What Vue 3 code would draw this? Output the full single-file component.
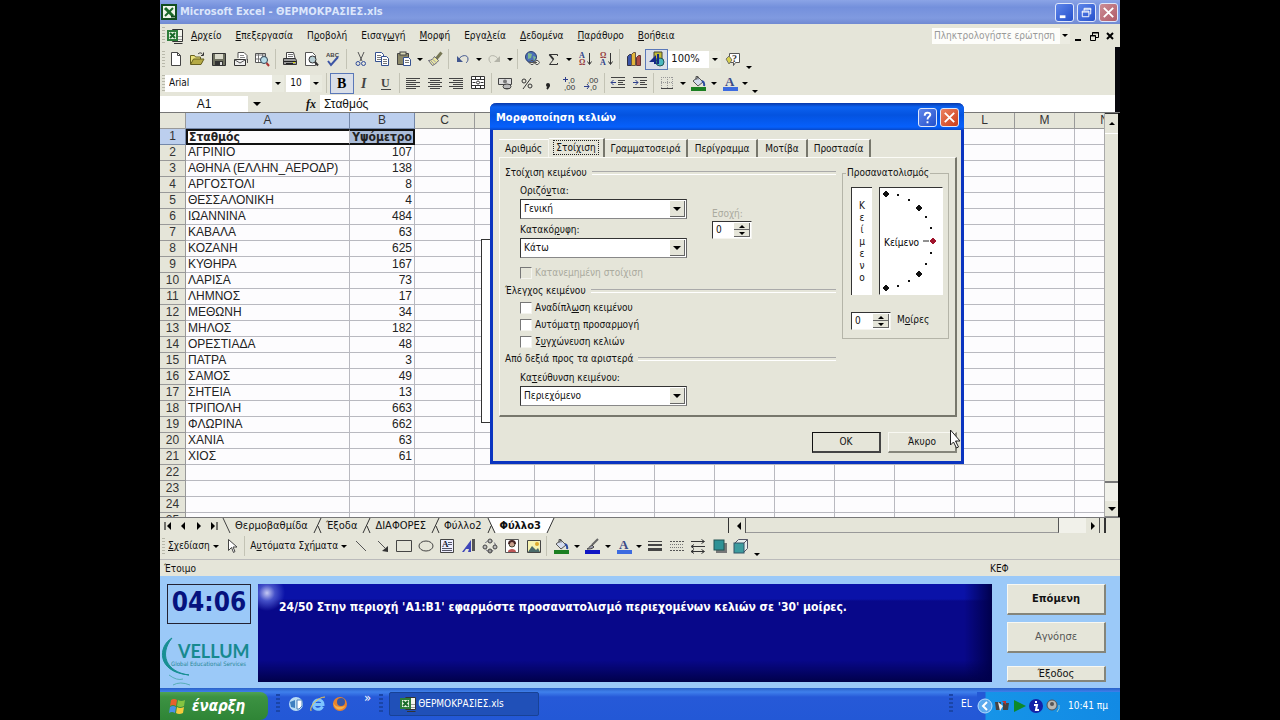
<script setup>
import { ref } from 'vue'

const menus = [
  ['', 'Α', 'ρχείο'], ['', 'Ε', 'πεξεργασία'], ['Π', 'ρ', 'οβολή'], ['Εισαγ', 'ω', 'γή'], ['', 'Μ', 'ορφή'],
  ['Εργα', 'λ', 'εία'], ['', 'Δ', 'εδομένα'], ['', 'Π', 'αράθυρο'], ['', 'Β', 'οήθεια'],
]
const stations = [
  ['ΑΓΡΙΝΙΟ', 107], ['ΑΘΗΝΑ (ΕΛΛΗΝ_ΑΕΡΟΔΡ)', 138], ['ΑΡΓΟΣΤΟΛΙ', 8], ['ΘΕΣΣΑΛΟΝΙΚΗ', 4], ['ΙΩΑΝΝΙΝΑ', 484],
  ['ΚΑΒΑΛΑ', 63], ['ΚΟΖΑΝΗ', 625], ['ΚΥΘΗΡΑ', 167], ['ΛΑΡΙΣΑ', 73], ['ΛΗΜΝΟΣ', 17], ['ΜΕΘΩΝΗ', 34], ['ΜΗΛΟΣ', 182],
  ['ΟΡΕΣΤΙΑΔΑ', 48], ['ΠΑΤΡΑ', 3], ['ΣΑΜΟΣ', 49], ['ΣΗΤΕΙΑ', 13], ['ΤΡΙΠΟΛΗ', 663], ['ΦΛΩΡΙΝΑ', 662], ['ΧΑΝΙΑ', 63], ['ΧΙΟΣ', 61],
  ['', ''], ['', ''], ['', ''], ['', ''],
]
// Headings behind the dialog stay blank.
const letters = ['C', '', '', '', '', '', '', '', '', 'L', 'M', 'N']
const sheets = ['Θερμοβαθμίδα', 'Έξοδα', 'ΔΙΑΦΟΡΕΣ', 'Φύλλο2', 'Φύλλο3']
const dialogTabs = ['Αριθμός', 'Στοίχιση', 'Γραμματοσειρά', 'Περίγραμμα', 'Μοτίβα', 'Προστασία']
const horizontal = ref('Γενική')
const vertical = ref('Κάτω')
const direction = ref('Περιεχόμενο')
const checks = [['Αναδίπλ', 'ω', 'ση κειμένου'], ['Αυτόματ', 'η', ' προσαρμογή'], ['Σ', 'υ', 'γχώνευση κελιών']]
const dial = [
  [6, 6, 2], [18, 7, 1], [29, 12, 1], [39, 20, 2], [46, 29, 1], [51, 40, 1], [53, 53, 3],
  [51, 65, 1], [46, 76, 1], [39, 86, 2], [29, 93, 1], [18, 98, 1], [6, 100, 2],
]

const g = (d, c = '#333', w = 1, f = 'none') => `<path d="${d}" stroke="${c}" stroke-width="${w}" fill="${f}"/>`
const lines = (rows, c = '#444') => rows.map(([x, y, w]) => `<rect x="${x}" y="${y}" width="${w}" height="1" fill="${c}"/>`).join('')
const bucket = g('M3 6l5-4 5 5-5 4z', '#555', 1, '#d5dced') + g('M6 5V1.500h2v3', '#555') + g('M12 6c2 1 2.500 3 2 5', '#2c4aa0', 2)
const sortArrow = g('M12.500 2v11M10.500 10.500l2 3 2-3')
const txt = (x, y, s, c, t, extra = '') => `<text x="${x}" y="${y}" font-size="${s}" fill="${c}" font-family="Liberation Serif, serif" font-weight="bold" ${extra}>${t}</text>`

const icons = {
  excel: '<rect width="16" height="16" fill="#114d20"/><rect x="2" y="2" width="12" height="12" fill="#eef5ea"/>' + g('M4 4l8 8', '#1a6a2a', 3) + g('M12 4l-8 8', '#1a6a2a', 2) + g('M10 12.500h4', '#114d20', 2),
  book: g('M5.500 1.500h10v12h-10z', '#333', 1, '#f4f6ee') + g('M7 15.500h8.500', '#333') + '<rect x="0" y="2" width="11" height="11" fill="#2d7d3a"/><rect x="2" y="4" width="7" height="7" fill="#e6f3e0"/>' + g('M3 5l5 5M8 5l-5 5', '#1a6a2a', 2) + g('M11 8.500h4M11 11.500h4', '#999'),
  new: g('M3.500 1.500h6l3 3v10h-9z', '#444', 1, '#fff') + g('M9.500 1.500v3h3', '#444'),
  open: g('M1.500 13V4.500h4l1 1.500h5v2', '#666020', 1, '#e9e07c') + g('M1.500 13.500l3-5.500h10.500l-3 5.500z', '#666020', 1, '#b5aa45') + g('M9 3c2-2 4-1 5 1M14.500 1.500V4.500H12', '#333'),
  save: g('M1.500 2.500h13v12h-13z', '#333', 1, '#6e7060') + '<rect x="4" y="3" width="8" height="5" fill="#dadacb"/><rect x="4" y="10" width="8" height="4" fill="#333"/><rect x="9" y="11" width="2" height="3" fill="#ddd"/>',
  mail: g('M5 7V1.500h6l3 3V9', '#555', 1, '#fff') + g('M7 4.500h4M7 6.500h5', '#888') + g('M1.500 8.500h11v6h-11z', '#333', 1, '#eee') + g('M2 9l5 3 5-3', '#555') + g('M14.500 8v4', '#555'),
  search: g('M1.500 2.500h10v9h-10z', '#555', 1, '#fff') + g('M2 4h9M4.500 3v8M8.500 3v8M2 8h9', '#777') + '<circle cx="10" cy="9" r="3.500" fill="#b7dce8" stroke="#345"/>' + g('M12.500 12l2.500 3', '#a33', 2),
  print: g('M4.500 7V1.500h7L13 7', '#444', 1, '#fff') + g('M6 3.500h5M6 5.500h5', '#777') + g('M1.500 7.500h12l1 2v4h-13z', '#333', 1, '#999') + g('M2 10.500h12M4 12.500h7', '#222') + '<rect x="11" y="11" width="2" height="1" fill="#dd0"/>',
  preview: g('M2.500 1.500h7l3 3v10h-10z', '#555', 1, '#fff') + '<circle cx="9.500" cy="8.500" r="3.500" fill="#b7cfd5" stroke="#333"/>' + g('M12 11l3 3.500', '#333', 2),
  spell: '<text x="1" y="6" font-size="6" font-family="Liberation Sans" font-weight="bold" fill="#444">ABC</text>' + g('M3 10l3 4 7-8', '#3c55a5', 2),
  cut: g('M5 1l4 9M11 1l-4 9', '#555') + '<circle cx="5" cy="12.500" r="2" fill="none" stroke="#2f4c9b"/><circle cx="10.500" cy="12.500" r="2" fill="none" stroke="#2f4c9b"/>',
  copy: g('M1.500 1.500h6l2 2v7h-8z', '#345090', 1, '#fff') + g('M3 4.500h4M3 6.500h5M3 8.500h5', '#777') + g('M7.500 5.500h5l2 2v7h-7z', '#345090', 1, '#fff') + g('M9 8.500h4M9 10.500h4M9 12.500h4', '#777'),
  paste: g('M1.500 2.500h11v11h-11z', '#444', 1, '#8b8868') + '<rect x="4" y="1" width="6" height="3" fill="#d9d8b5" stroke="#444"/>' + g('M7.500 6.500h5l2 2v6h-7z', '#345090', 1, '#fff') + g('M9 9.500h4M9 11.500h4', '#777'),
  brush: g('M14.500 1.500l-5 6', '#775', 3) + g('M1.500 9.500c3 0 5-2 6-4l4 4c-1 2-4 4-6 5z', '#667', 1, '#e9e6a1') + g('M4 10l3 3M6 8.500l3 3', '#99a'),
  undo: g('M4 8c2-4 9-5 9 0 0 2-1 3-2 4', '#41568f', 1) + '<path d="M2 5v6h6z" fill="#41568f"/>',
  redo: g('M12 8c-2-4-9-5-9 0 0 2 1 3 2 4', '#b3b3a8', 1) + '<path d="M14 5v6H8z" fill="#b3b3a8"/>',
  globe: '<circle cx="7" cy="6" r="5.500" fill="#4c6fb7" stroke="#2a3f70"/><path d="M4 2l4 1-1 4-3 1zM9 5l3 1-2 4z" fill="#7fb98f"/>' + g('M6 11.500h3M9 11.500h4M7 9.500h2l2 2-2 2H7l-2-2zM12 9.500h2l1.500 2-1.500 2h-2l-1.500-2z', '#555'),
  sigma: g('M12.500 5V3.500h-8l4 5-4 5h8V12', '#333', 1) + g('M4.500 3.500l4 5', '#333', 2),
  az: txt(2, 7, 8, '#2e3f8a', 'Α') + txt(2, 14, 8, '#943b3b', 'Ω') + sortArrow,
  za: txt(2, 7, 8, '#943b3b', 'Ω') + txt(2, 14, 8, '#2e3f8a', 'Α') + sortArrow,
  chart: g('M1.500 5.500l2-2h2v11h-4z', '#334', 1, '#3b55a8') + g('M5.500 3.500l2-2h2v13h-4z', '#654', 1, '#e2b63c') + g('M10.500 6.500l2-2h2v10h-4z', '#633', 1, '#b04c42'),
  draw: '<path d="M5 1h8v7H5z" fill="#c4bd35" stroke="#443"/><circle cx="11" cy="11" r="4" fill="#4bb7bd" stroke="#255"/><path d="M0 11L7 4v9h-2v-2H3z" fill="#162a88"/>' + g('M9 3v10', '#162a88', 2),
  help: g('M4.500 2.500h10v9h-4l-2 3v-3h-4z', '#555', 1, '#fff') + txt(7, 11, 10, '#333', '?') + '<path d="M1 8l3-3 3 4-3 4z" fill="#d8d04c" stroke="#776"/>',
  bold: txt(3, 13, 14, '#000', 'B'),
  italic: txt(5, 13, 14, '#444', 'I', 'font-style="italic"'),
  underline: txt(3, 12, 12, '#444', 'U') + lines([[3, 14, 10]]),
  left: lines([[1, 3, 14], [1, 5, 10], [1, 7, 14], [1, 9, 10], [1, 11, 14], [1, 13, 10]]),
  center: lines([[1, 3, 14], [3, 5, 10], [1, 7, 14], [3, 9, 10], [1, 11, 14], [3, 13, 10]]),
  right: lines([[1, 3, 14], [5, 5, 10], [1, 7, 14], [5, 9, 10], [1, 11, 14], [5, 13, 10]]),
  merge: g('M1.500 1.500h13v12h-13zM1.500 4.500h13M1.500 10.500h13M5.500 1.500v3M10.500 1.500v3M5.500 10.500v3M10.500 10.500v3', '#333', 1, '#fff') + g('M2.500 7.500h3M10.500 7.500h3') + '<circle cx="8" cy="7.500" r="1.500" fill="none" stroke="#333"/>',
  money: g('M1.500 3.500h13v6h-13z', '#444', 1, '#ddd') + '<circle cx="8" cy="6.500" r="2" fill="#777"/><ellipse cx="10" cy="11.500" rx="4" ry="2.500" fill="#bbb" stroke="#444"/>' + g('M7 13.500h6', '#444'),
  percent: '<circle cx="5" cy="6" r="2" fill="none" stroke="#333"/><circle cx="11" cy="11" r="2" fill="none" stroke="#333"/>' + g('M12 3L4 14'),
  comma: '<circle cx="8" cy="10" r="2" fill="#222"/>' + g('M9 10c0 2-1 3-2 4', '#222', 2),
  incdec: '<text x="6" y="8" font-size="8" font-family="Liberation Sans" fill="#333">,0</text><text x="2" y="15" font-size="8" font-family="Liberation Sans" fill="#333">,00</text>' + g('M1 4.500h5M3.500 2v5', '#2e3f8a'),
  decdec: '<text x="4" y="8" font-size="8" font-family="Liberation Sans" fill="#333">,00</text><text x="7" y="15" font-size="8" font-family="Liberation Sans" fill="#333">,0</text>' + g('M1 11.500h5M4 9l2 2.500-2 2.500', '#2e3f8a'),
  outdent: lines([[1, 2, 14], [8, 5, 7], [8, 7, 5], [8, 9, 7], [1, 12, 14]]) + g('M6 7.500H1M3.500 5L1 7.500 3.500 10', '#2e3f8a'),
  indent: lines([[1, 2, 14], [8, 5, 7], [8, 7, 5], [8, 9, 7], [1, 12, 14]]) + g('M1 7.500h5M3.500 5L6 7.500 3.500 10', '#2e3f8a'),
  borders: '<path d="M2 2.500h12M2 7.500h12M2.500 2v11M8.500 2v11M13.500 2v11" stroke="#999" stroke-dasharray="1 1"/>' + g('M2 13.500h12', '#444'),
  fill: bucket + '<rect x="1" y="12" width="15" height="4" fill="#1b7f22"/>',
  fontColor: txt(3, 11, 13, '#3b4a86', 'A') + '<rect x="1" y="12" width="15" height="4" fill="#3d6be0"/>',
  lineColor: g('M14 1L8 7', '#666', 2) + g('M3 11c2 0 2-3 5-4l2 2c-2 2-4 2-7 2z', '#444', 1, '#99a') + '<rect x="1" y="12" width="15" height="4" fill="#1016c4"/>',
  pointer: g('M4.500 1.500v11l3-3 2 5 1.500-1-2-4.500h4z', '#444', 1, '#fff'),
  line: g('M3 3l10 10', '#555'),
  arrow: g('M3 3l7 7', '#555') + '<path d="M13 14V8l-6 5z" fill="#333"/>',
  rect: g('M.500 2.500h15v11H.500z', '#444'),
  oval: '<ellipse cx="8" cy="8" rx="7" ry="5" fill="none" stroke="#444"/>',
  textbox: g('M1.500 1.500h13v13h-13z', '#444', 1, '#eef') + txt(3, 9, 9, '#223', 'A') + g('M9 4.500h4M9 6.500h4M3 10.500h10M3 12.500h10', '#556'),
  wordart: '<path d="M1 14L10 2v12H7l1-3H5l-2 3z" fill="#3e46b8"/>' + g('M12.500 1v12', '#555', 3),
  diagram: '<circle cx="8" cy="8" r="5.500" fill="none" stroke="#667" stroke-dasharray="3 2"/><circle cx="8" cy="3" r="2" fill="#bbb" stroke="#444"/><circle cx="3" cy="9" r="2" fill="#bbb" stroke="#444"/><circle cx="13" cy="9" r="2" fill="#bbb" stroke="#444"/><circle cx="8" cy="13" r="2" fill="#999" stroke="#444"/>',
  clipart: g('M1.500 1.500h13v13h-13z', '#555', 1, '#fff') + '<path d="M4 14c0-4 8-4 8 0z" fill="#b55"/><circle cx="8" cy="6" r="3" fill="#c9a08c" stroke="#443"/>' + g('M5 6c0-4 6-4 6 0', '#422', 2),
  picture: g('M1.500 2.500h13v12h-13z', '#444', 1, '#f6f2b0') + '<circle cx="11" cy="6" r="2" fill="#dda92a"/><path d="M2 14l4-6 4 4 2-2 2 4z" fill="#4a6a6a"/>',
  weights: lines([[1, 3, 14]]) + '<rect x="1" y="6" width="14" height="2" fill="#444"/><rect x="1" y="10" width="14" height="3" fill="#444"/>',
  dashes: '<path d="M1 3.500h14M1 12.500h14" stroke="#555" stroke-dasharray="2 1"/><path d="M1 6.500h14M1 9.500h14" stroke="#777" stroke-dasharray="1 1"/>',
  arrows: g('M1 3.500h13M11.500 1.500l3 2-3 2M2 8.500h13M4 6.500l-3 2 3 2M1 13.500h13M11.500 11.500l3 2-3 2M4 11.500l-3 2 3 2', '#333'),
  shadow: '<rect x="4" y="5" width="11" height="10" fill="#777"/><rect x="2" y="2" width="10" height="10" fill="#2e9296" stroke="#255"/>',
  cube: g('M1.500 5.500l4-4h9v9l-4 4', '#556', 1, '#e6eded') + '<rect x="1" y="5" width="10" height="10" fill="#3d9c9f" stroke="#356"/>' + g('M10.500 5.500l4-4', '#556'),
}

const std = 'new open save mail search | print preview spell | cut copy paste > brush | undo > redo > | globe sigma > az za | chart draw* zoom help >'.split(' ')
const fmt = 'font size | bold* italic underline | left center right merge | money percent comma incdec decdec | outdent indent | borders > fill > fontColor > >'.split(' ')
const drw = 'Draw pointer | Shapes line arrow rect oval textbox wordart diagram clipart picture | fill > lineColor > fontColor > weights dashes arrows shadow cube >'.split(' ')
const bars = [['standard', std], ['format', fmt]]
const key = (n) => n.replace('*', '')
</script>

<template>
  <main class="stage">
    <div class="screen">
      <header class="title-bar">
        <svg class="ico" viewBox="0 0 16 16" v-html="icons.excel" />
        <h1>Microsoft Excel - ΘΕΡΜΟΚΡΑΣΙΕΣ.xls</h1>
        <button class="win" aria-label="Ελαχιστοποίηση"><svg viewBox="0 0 16 16"><path d="M3 11h6v3H3z" fill="#fff" /></svg></button>
        <button class="win" aria-label="Επαναφορά"><svg viewBox="0 0 16 16"><path d="M5.500 6V3.500h7v6H11M3.500 6.500h7v6h-7zM3 7.500h8M5 4.500h8" stroke="#fff" fill="none" /></svg></button>
        <button class="win close" aria-label="Κλείσιμο"><svg viewBox="0 0 16 16"><path d="M3 3l10 10M13 3L3 13" stroke="#fff" stroke-width="2" /></svg></button>
      </header>

      <div class="chrome">
        <nav class="menu-bar">
          <span class="grip" />
          <svg class="ico" viewBox="0 0 16 16" v-html="icons.book" />
          <button v-for="m in menus" :key="m[2]">{{ m[0] }}<u>{{ m[1] }}</u>{{ m[2] }}</button>
          <span class="spacer" />
          <input class="ask" aria-label="Ερώτηση" placeholder="Πληκτρολογήστε ερώτηση">
          <span class="drop-cell"><i class="tri" /></span>
          <button class="mini" aria-label="Ελαχιστοποίηση βιβλίου"><svg viewBox="0 0 12 12"><path d="M3 9h6v2H3z" /></svg></button>
          <button class="mini" aria-label="Επαναφορά βιβλίου"><svg viewBox="0 0 12 12"><path d="M4.500 5V2.500h6v5H8M2.500 5.500h5v5h-5zM2 6h6M4 3h7" fill="none" stroke="#000" /></svg></button>
          <button class="mini" aria-label="Κλείσιμο βιβλίου"><svg viewBox="0 0 12 12"><path d="M3 3l6 6M9 3L3 9" stroke="#000" stroke-width="2" /></svg></button>
        </nav>

        <div v-for="[name, items] in bars" :key="name" class="toolbar" :class="name" role="toolbar">
          <span class="grip" />
          <template v-for="(n, i) in items" :key="i">
            <span v-if="n === '|'" class="sep" />
            <button v-else-if="n === '>'" class="more" aria-label="Περισσότερα"><i class="tri" /></button>
            <span v-else-if="n === 'zoom'" class="combo zoom"><input aria-label="Ζουμ" value="100%"><i class="tri" /></span>
            <span v-else-if="n === 'font'" class="combo font"><input aria-label="Γραμματοσειρά" value="Arial"><i class="tri" /></span>
            <span v-else-if="n === 'size'" class="combo size"><input aria-label="Μέγεθος" value="10"><i class="tri" /></span>
            <button v-else class="tool" :class="{ on: n.endsWith('*') }" :aria-label="key(n)"><svg class="ico" viewBox="0 0 16 16" v-html="icons[key(n)]" /></button>
          </template>
        </div>
      </div>

      <div class="formula">
        <div class="name-box"><input aria-label="Πλαίσιο ονόματος" value="A1"></div>
        <span class="name-drop"><i class="tri big" /></span>
        <span class="fx">fx</span>
        <input class="fx-input" aria-label="Γραμμή τύπων" value="Σταθμός">
      </div>

      <section class="book">
        <div class="grid-area">
          <table>
            <colgroup><col class="c-head"><col class="c-a"><col class="c-b"><col v-for="(l, i) in letters" :key="i" class="c-x"></colgroup>
            <thead>
              <tr><th /><th class="sel">A</th><th class="sel">B</th><th v-for="(l, i) in letters" :key="i">{{ l }}</th></tr>
            </thead>
            <tbody>
              <tr class="head-row"><th class="sel">1</th><td class="h-a">Σταθμός</td><td class="h-b">Υψόμετρο</td><td v-for="(l, i) in letters" :key="i" /></tr>
              <tr v-for="(s, i) in stations" :key="i">
                <th>{{ i + 2 }}</th><td>{{ s[0] }}</td><td class="num">{{ s[1] }}</td><td v-for="(l, j) in letters" :key="j" />
              </tr>
            </tbody>
          </table>
          <div class="chart-frame" />
        </div>
        <div class="v-scroll"><i class="up" /><span class="thumb" /><span class="track" /><i class="down" /></div>
      </section>

      <div class="tab-row">
        <div class="nav-tabs">
          <button aria-label="Πρώτο"><svg viewBox="0 0 10 10"><path d="M2 1v8" stroke="#000" /><path d="M8 1v8L4 5z" /></svg></button>
          <button aria-label="Προηγούμενο"><svg viewBox="0 0 10 10"><path d="M7 1v8L3 5z" /></svg></button>
          <button aria-label="Επόμενο φύλλο"><svg viewBox="0 0 10 10"><path d="M3 1v8l4-4z" /></svg></button>
          <button aria-label="Τελευταίο"><svg viewBox="0 0 10 10"><path d="M2 1v8l4-4z" /><path d="M8 1v8" stroke="#000" /></svg></button>
        </div>
        <svg class="slash first" viewBox="0 0 12 15"><path d="M1 0l7 15" stroke="#444" fill="none" /></svg>
        <template v-for="(s, i) in sheets" :key="s">
          <button class="sheet" :class="{ active: i === 4 }">{{ s }}</button>
          <svg class="slash" viewBox="0 0 16 15">
            <path v-if="i === 3" d="M5 0h11v15h-4z" fill="#fff" />
            <path v-if="i === 4" d="M0 0h12L5 15H0z" fill="#fff" />
            <path v-if="i !== 3" d="M12 0L5 15" stroke="#333" />
            <path v-if="i === 3" d="M5 0l7 15M8 8l-3 7" stroke="#333" />
            <path v-if="i < 3" d="M9 8l3 7" stroke="#333" />
          </svg>
        </template>
        <span class="spacer" />
        <div class="h-scroll"><span class="split" /><i class="lt" /><span class="h-thumb" /><span class="h-track" /><i class="rt" /><span class="split end" /></div>
      </div>

      <div class="toolbar drawing" role="toolbar">
        <span class="grip" />
        <template v-for="(n, i) in drw" :key="i">
          <span v-if="n === '|'" class="sep" />
          <button v-else-if="n === '>'" class="more" aria-label="Περισσότερα"><i class="tri" /></button>
          <button v-else-if="n === 'Draw'" class="label-tool draw-l"><u>Σ</u>χεδίαση <i class="tri" /></button>
          <button v-else-if="n === 'Shapes'" class="label-tool shapes-l">Α<u>υ</u>τόματα Σχήματα <i class="tri" /></button>
          <button v-else class="tool" :aria-label="n"><svg class="ico" viewBox="0 0 16 16" v-html="icons[n]" /></button>
        </template>
      </div>
      <footer class="status"><span>Έτοιμο</span><span class="caps">ΚΕΦ</span></footer>

      <section class="test">
        <div class="side">
          <div class="clock">04:06</div>
          <svg class="logo" viewBox="0 0 98 56">
            <path d="M12 4C-2 12-4 38 29 41C6 38-1 20 12 4z" fill="#188f93" stroke="#188f93" />
            <path d="M9 41q8 6 14 4M13 51q7-4 17 0" stroke="#58aeb8" fill="none" />
            <text x="18" y="24" class="brand">VELLUM</text>
            <text x="11" y="32" class="motto">Global Educational Services</text>
          </svg>
        </div>
        <p class="question">24/50 Στην περιοχή 'A1:B1' εφαρμόστε προσανατολισμό περιεχομένων κελιών σε '30' μοίρες.</p>
        <div class="actions">
          <button class="next">Επόμενη</button>
          <button class="skip">Αγνόησε</button>
          <button class="exit">Έξοδος</button>
        </div>
      </section>

      <footer class="taskbar">
        <button class="start">
          <svg viewBox="0 0 18 18"><path d="M2 3q3-2 6 0L7 9Q4 7 1 9z" fill="#e8602c" /><path d="M9 3q3 2 7 0l-1 6q-4 2-7 0z" fill="#84c441" /><path d="M1 10q3-2 6 0l-1 6Q3 14 0 16z" fill="#4a90e8" /><path d="M8 10q3 2 7 0l-1 6q-4 2-7 0z" fill="#f6ca3c" /></svg>
          έναρξη
        </button>
        <span class="dots d1" />
        <div class="quick">
          <svg viewBox="0 0 16 16"><circle cx="8" cy="8" r="7" fill="#b9dcf4" /><path d="M2 6l5-2v8l-4-1z" fill="#3e7fc0" /><path d="M9 4h5v6l-3 3H9z" fill="#fff" stroke="#4b82bd" /></svg>
          <svg viewBox="0 0 16 16"><path d="M3.500 8.500h9.500c0-6-9-6-9.500 0 0 6 7 6 9 2" stroke="#7cc4ff" stroke-width="3" fill="none" /><path d="M1 15C-1 10 8 1 15 1" stroke="#f0c850" stroke-width="1" fill="none" /></svg>
          <svg viewBox="0 0 16 16"><circle cx="8" cy="8" r="7" fill="#e8822c" /><circle cx="9" cy="6" r="4" fill="#3458a8" /><path d="M1 5c1 6 6 7 12 5-2 5-11 6-12-5z" fill="#f4b04a" /></svg>
        </div>
        <span class="chev">»</span>
        <span class="dots d2" />
        <button class="task"><svg class="ico" viewBox="0 0 16 16" v-html="icons.book" />ΘΕΡΜΟΚΡΑΣΙΕΣ.xls</button>
        <span class="spacer" />
        <span class="dots d3" />
        <span class="lang">EL</span>
        <div class="tray">
          <svg viewBox="0 0 16 16"><circle cx="8" cy="8" r="7" fill="#5aa9ee" stroke="#b5dcff" /><path d="M10 4L6 8l4 4" stroke="#fff" stroke-width="2" fill="none" /></svg>
          <svg viewBox="0 0 16 16"><path d="M1 4h6v8H2zM9 5h6l-1 7H9z" fill="#444" /><path d="M4 4l5 4-3 5z" fill="#eee" /><path d="M8 3h4v4z" fill="#b33" /></svg>
          <svg viewBox="0 0 16 16"><path d="M3 2l12 6-12 6z" fill="#0d8a2a" /></svg>
          <svg viewBox="0 0 16 16"><circle cx="8" cy="8" r="7" fill="#1422a8" /><path d="M6 7h3l-1 5h3M8 3v2" stroke="#fff" stroke-width="2" fill="none" /></svg>
          <svg viewBox="0 0 16 16"><circle cx="7" cy="7" r="5" fill="#b9b9b4" stroke="#555" /><circle cx="7" cy="6" r="2" fill="#555" /><path d="M12 14q3-3 2-7" stroke="#9cc" fill="none" /></svg>
          <time>10:41 πμ</time>
        </div>
      </footer>

      <div class="dialog" role="dialog" aria-label="Μορφοποίηση κελιών">
        <div class="dlg-title">
          <h2>Μορφοποίηση κελιών</h2>
          <button class="win help" aria-label="Βοήθεια"><svg viewBox="0 0 16 16"><path d="M5 6c0-4 6-4 6-1 0 2-3 2-3 5M8 12v2" stroke="#fff" stroke-width="2" fill="none" /></svg></button>
          <button class="win close" aria-label="Κλείσιμο"><svg viewBox="0 0 16 16"><path d="M3 3l10 10M13 3L3 13" stroke="#fff" stroke-width="2" /></svg></button>
        </div>
        <div class="dlg-body">
          <div class="tabs" role="tablist">
            <button v-for="(t, i) in dialogTabs" :key="t" class="tab" role="tab" :class="['t' + i, { current: i === 1 }]"><span>{{ t }}</span></button>
          </div>
          <div class="pane">
            <div class="left-col">
              <h3>Στοίχιση κειμένου</h3>
              <div class="align-row">
                <div class="fields">
                  <label for="hor">Οριζό<u>ν</u>τια:</label>
                  <span class="select"><select id="hor" v-model="horizontal"><option>Γενική</option></select><b><i class="tri big" /></b></span>
                  <label for="ver" class="second">Κατακό<u>ρ</u>υφη:</label>
                  <span class="select"><select id="ver" v-model="vertical"><option>Κάτω</option></select><b><i class="tri big" /></b></span>
                </div>
                <div class="indent-field">
                  <label for="ind" class="off">Εσοχή:</label>
                  <span class="spin"><input id="ind" value="0"><b><i class="su" /><i class="sd" /></b></span>
                </div>
              </div>
              <label class="check off"><input type="checkbox" disabled>Κατανεμημένη στοίχιση</label>
              <h3>Έλεγχος κειμένου</h3>
              <label v-for="c in checks" :key="c[0]" class="check"><input type="checkbox"><span>{{ c[0] }}<u>{{ c[1] }}</u>{{ c[2] }}</span></label>
              <h3 class="rtl">Από δεξιά προς τα αριστερά</h3>
              <div class="fields dir">
                <label for="dir">Κα<u>τ</u>εύθυνση κειμένου:</label>
                <span class="select"><select id="dir" v-model="direction"><option>Περιεχόμενο</option></select><b><i class="tri big" /></b></span>
              </div>
            </div>
            <fieldset>
              <legend>Προσανατολισμός</legend>
              <div class="orient">
                <button class="vertical-text"><span v-for="(c, i) in 'Κείμενο'" :key="i">{{ c }}</span></button>
                <svg class="dial" viewBox="0 0 62 106">
                  <rect width="62" height="106" fill="#fff" />
                  <path d="M43 53h6" stroke="#222" />
                  <template v-for="(p, i) in dial" :key="i">
                    <rect v-if="p[2] === 1" :x="p[0] - 1" :y="p[1] - 1" width="2" height="2" fill="#111" />
                    <path v-else :d="`M${p[0]} ${p[1] - 3}l3 3-3 3-3-3z`" :fill="p[2] === 3 ? '#a0142c' : '#111'" :stroke="p[2] === 3 ? '#a0142c' : '#111'" />
                  </template>
                  <text x="4" y="58">Κείμενο</text>
                </svg>
              </div>
              <div class="degrees">
                <span class="spin"><input id="deg" value="0"><b><i class="su" /><i class="sd" /></b></span>
                <label for="deg">Μ<u>ο</u>ίρες</label>
              </div>
            </fieldset>
          </div>
          <div class="dlg-actions"><button class="ok">OK</button><button>Άκυρο</button></div>
        </div>
      </div>
      <svg class="cursor" viewBox="0 0 12 20"><path d="M1.500 1v15l3-3 3 6 2-1-3-6h4.500z" fill="#fff" stroke="#222" /></svg>
    </div>
  </main>
</template>

<style>
html, body { margin: 0; background: #000; }
</style>

<style scoped>
* { box-sizing: border-box; }
.stage { padding: 0 12.5%; background: #000; font: 10px/16px "DejaVu Sans Condensed", "DejaVu Sans", sans-serif; color: #111; }
.screen { position: relative; display: flex; flex-direction: column; height: 100vh; background: #e5e5d9; overflow: hidden; }
button, input, select { font: inherit; color: inherit; margin: 0; padding: 0; border: 0; background: none; border-radius: 0; min-width: 0; }
input, select { outline: 0; }
h1, h2, h3, p { margin: 0; }
svg { display: block; }
.ico { width: 16px; height: 16px; flex: none; }
.spacer { flex: 1; }
.tri { display: inline-block; border: 3px solid transparent; border-top-color: #000; border-bottom: 0; vertical-align: middle; }
.tri.big { border-width: 4px; border-bottom: 0; }

.title-bar { display: flex; align-items: center; gap: 3px; height: 24px; padding: 0 2px 0 1px; background: linear-gradient(#8ba4e6, #7490dc 30%, #809ae0 75%, #7089d2); flex: none; }
.title-bar h1 { flex: 1; font: bold 11px/16px "DejaVu Sans Condensed", sans-serif; color: #dce6fb; white-space: nowrap; }
.win { width: 19px; height: 19px; border: 1px solid #dfe7fb; border-radius: 3px; background: linear-gradient(135deg, #5f86ea, #2450cc); flex: none; }
.win svg { width: 15px; height: 15px; margin: auto; }
.win.close { background: linear-gradient(135deg, #cc8d95, #b05b68); }

.chrome { border-right: 5px solid #07070d; flex: none; }
.menu-bar { display: flex; align-items: center; height: 23px; padding-left: 2px; padding-right: 2px; margin-right: -5px; background: #e5e5d9; }
.menu-bar > .ico { margin: 0 1px 0 2px; }
.menu-bar > button:not(.mini) { padding: 0 7px; white-space: nowrap; }
.grip { width: 3px; height: 17px; flex: none; background: repeating-linear-gradient(#b8b8aa 0 1px, transparent 1px 3px); }
.ask { width: 128px; height: 16px; padding-left: 2px; background: #fdfdfa; }
.ask::placeholder { color: #999; opacity: 1; }
.drop-cell { width: 10px; height: 16px; display: grid; place-items: center; background: #ecece2; }
.mini { width: 16px; height: 16px; }
.mini svg { width: 12px; height: 12px; margin: auto; }
.toolbar { display: flex; align-items: center; height: 24px; padding-left: 2px; flex: none; }
.standard { width: 594px; }
.format { width: 600px; }
.drawing { width: 602px; height: 26px; }
.tool { flex: 22 1 0; height: 21px; display: grid; place-items: center; }
.tool.on { border: 1px solid #5a78b8; background: #dadfe8; }
.more { flex: 10 1 0; height: 20px; display: grid; place-items: center; }
.more:last-child { align-items: end; }
.sep { flex: 6 1 0; height: 20px; background: linear-gradient(90deg, transparent 2px, #c3c3b5 2px 3px, transparent 3px); }
.combo { display: flex; align-items: center; height: 17px; margin-right: 2px; padding-right: 3px; background: linear-gradient(270deg, #e9eadf 12px, #fff 12px); overflow: hidden; }
.combo input { flex: 1; width: 0; padding-left: 4px; }
.font { flex: 119 1 0; }
.size { flex: 34 1 0; }
.zoom { flex: 50 1 0; font-size: 11px; }
.combo.zoom input { padding-left: 3px; }

.formula { display: flex; align-items: center; height: 17px; font-family: "Liberation Sans", sans-serif; font-size: 12px; flex: none; border-right: 5px solid #07070d; }
.name-box { width: 88px; height: 16px; background: #fff; }
.name-box input { width: 100%; text-align: center; height: 16px; }
.name-drop { width: 18px; display: grid; place-items: center; }
.fx { width: 54px; padding-right: 4px; text-align: right; font: italic bold 12px/16px "Liberation Serif", serif; }
.fx-input { flex: 1; height: 17px; padding-left: 4px; background: #fff; }

.book { flex: 1; min-height: 0; display: flex; border-top: 1px solid #777; }
.grid-area { position: relative; flex: 1; min-width: 0; overflow: hidden; background: #fdfcfe; }
table { border-collapse: separate; border-spacing: 0; table-layout: fixed; width: 970px; font: 12px/15px "Liberation Sans", sans-serif; }
.c-head { width: 26px; } .c-a { width: 164px; } .c-b { width: 65px; } .c-x { width: 60px; }
th, td { height: 16px; padding: 0 2px; border-right: 1px solid #b9b9c0; border-bottom: 1px solid #b9b9c0; white-space: nowrap; overflow: hidden; }
th { background: #e5e5d9; font-weight: normal; color: #333; border-color: #999; text-align: center; }
th.sel { background: #bccfee; border-color: #7488aa; }
td { color: #222; }
.num { text-align: right; }
.head-row td { font: bold 12px/12px "DejaVu Sans Condensed", sans-serif; }
.h-a { border: 2px solid #111; border-right: 1px solid #b9b9c0; }
.h-b { border: 2px solid #111; border-left: 0; background: #abbcd9; text-align: right; }
.head-row td.h-a, .head-row td.h-b { padding: 0 1px; }
.chart-frame { position: absolute; left: 321px; top: 126px; width: 400px; height: 184px; border: 1px solid #333; background: #fff; }
.v-scroll { width: 16px; display: flex; flex-direction: column; border-right: 2px solid #000; border-left: 1px solid #aaa; flex: none; }
.up, .down { height: 20px; display: grid; place-items: center; border-top: 1px solid #333; }
.up::after, .down::after { content: ""; border: 3px solid transparent; border-top: 0; border-bottom-color: #000; }
.down { border-top: 0; border-bottom: 1px solid #888; height: 16px; }
.down::after { border: 4px solid transparent; border-bottom: 0; border-top-color: #000; }
.thumb { flex: 1; border-top: 1px solid #fff; border-bottom: 2px solid #777; }
.track { height: 18px; background: #f1f1ea; }

.tab-row { display: flex; height: 16px; flex: none; border-top: 1px solid #777; font-size: 11px; line-height: 14px; }
.nav-tabs { display: flex; width: 62px; }
.nav-tabs button { flex: 1; }
.nav-tabs svg { width: 10px; height: 10px; margin: auto; }
.slash { width: 16px; height: 15px; flex: none; }
.slash.first { width: 12px; }
.sheet { padding: 0 1px; white-space: nowrap; }
.sheet.active { font-weight: bold; background: #fff; }
.h-scroll { width: 41%; display: flex; align-items: center; }
.split { width: 4px; height: 15px; border-left: 1px solid #333; margin-left: 2px; }
.lt, .rt { width: 14px; height: 15px; display: grid; place-items: center; border-right: 1px solid #555; }
.lt::after { content: ""; border: 4px solid transparent; border-left: 0; border-right-color: #000; }
.rt::after { content: ""; border: 4px solid transparent; border-right: 0; border-left-color: #000; }
.h-thumb { flex: 1; height: 15px; border-right: 1px solid #555; border-bottom: 1px solid #999; }
.h-track { width: 27px; height: 15px; background: #f1f1ea; }
.split.end { width: 16px; margin-left: 4px; border-left: 2px solid #333; }
.label-tool { text-align: left; white-space: nowrap; }
.draw-l { flex: 54 1 0; padding-left: 3px; }
.shapes-l { flex: 102 1 0; padding-left: 2px; }
.status { display: flex; height: 17px; padding: 1px 4px 0; border-top: 1px solid #bbb; flex: none; }
.caps { margin-left: auto; width: 126px; }

.test { display: flex; height: 112px; padding: 8px 14px 6px 0; background: #9bc9f8; flex: none; }
.side { width: 98px; flex: none; }
.clock { width: 84px; height: 40px; margin-left: 7px; border: 1px solid #223; text-align: center; font: bold 26px/35px "DejaVu Sans Condensed", sans-serif; color: #06127e; }
.logo { width: 98px; height: 56px; margin-top: 10px; }
.brand { font: bold 18px Lato, sans-serif; fill: #17898f; }
.motto { font: 6px "DejaVu Sans Condensed", sans-serif; fill: #278795; }
.question { flex: 1; padding: 15px 21px; color: #fff; font: bold 12px/16px "DejaVu Sans Condensed", sans-serif; background: radial-gradient(circle at 9px 9px, #c5c9f4, #4450c8 8px, transparent 18px), linear-gradient(270deg, #00004c, transparent 28px), linear-gradient(0deg, #00004a, transparent 22px), linear-gradient(#0a12a8 15px, #08088a 17px); }
.actions { width: 99px; margin-left: 15px; display: flex; flex-direction: column; flex: none; }
.actions button, .dlg-actions button { background: #e5e5d9; border: 1px solid #f8f8f2; border-right: 2px solid #85857a; border-bottom: 2px solid #85857a; }
.next { height: 31px; font-weight: bold; font-size: 11px; }
.skip { height: 31px; margin-top: 7px; font-size: 11px; }
.actions .skip { color: #555; }
.exit { height: 16px; margin-top: 13px; font-size: 11px; line-height: 12px; }

.taskbar { display: flex; align-items: center; height: 32px; background: linear-gradient(#2a62c8, #3f80ec 4px, #2659d8 9px, #2358d6); color: #fff; flex: none; }
.start { align-self: end; display: flex; align-items: center; gap: 5px; width: 108px; height: 28px; padding-left: 9px; border-radius: 0 8px 8px 0; background: linear-gradient(#4fa354, #3c9242 5px, #2f8536); font: italic bold 15px/20px "DejaVu Sans Condensed", sans-serif; }
.start svg { width: 18px; height: 18px; }
.dots { width: 4px; height: 20px; background: repeating-linear-gradient(#1a45a8 0 2px, transparent 2px 4px); }
.d1, .d2 { margin-left: 8px; }
.d3 { margin-right: 8px; }
.quick { display: flex; gap: 6px; margin-left: 8px; }
.quick svg { width: 16px; height: 16px; }
.chev { margin: -12px 0 0 16px; font-size: 13px; }
.task { display: flex; align-items: center; gap: 2px; width: 150px; height: 24px; margin-left: 6px; padding-left: 10px; border: 1px solid #184296; border-radius: 2px; background: #2050b8; }
.lang { width: 16px; }
.tray { display: flex; align-items: center; gap: 1px; height: 28px; width: 143px; background: linear-gradient(90deg, #2358d6 8px, #1694e8 9px, #128ae4); align-self: end; }
.tray svg { width: 16px; height: 16px; }
.tray time { margin-left: 6px; white-space: nowrap; }

.dialog { position: absolute; left: 330px; top: 103px; width: 474px; border: 3px solid #0a34c0; border-top: 0; border-radius: 6px 6px 0 0; background: #e5e5d9; }
.dlg-title { display: flex; align-items: center; gap: 3px; height: 27px; margin: 0 -3px; padding: 2px 5px 0 6px; border-radius: 6px 6px 0 0; background: linear-gradient(#0838a8, #0c62f0 4px, #0453e0 12px, #0660fc 24px, #0848c8); }
.dlg-title h2 { flex: 1; font: bold 11px/16px "DejaVu Sans Condensed", sans-serif; color: #fff; }
.dlg-title .close { background: linear-gradient(135deg, #ec8262, #cc3c18); }
.dlg-body { padding: 8px 4px 8px 6px; }
.tabs { display: flex; height: 19px; align-items: flex-end; }
.tab { height: 18px; border-top: 1px solid #fff; border-right: 2px solid #77776c; white-space: nowrap; }
.tab.current { height: 19px; }
.tab.current span { outline: 1px dotted #222; padding: 1px 2px; }
.t0 { width: 50px; border-right: 1px solid #f6f6f0; } .t1 { width: 56px; } .t2 { width: 83px; } .t3 { width: 70px; } .t4 { width: 50px; } .t5 { width: 63px; }
.pane { display: flex; justify-content: space-between; padding: 7px 6px 9px 5px; border: 1px solid #fbfbf6; border-right: 2px solid #77776c; border-bottom: 2px solid #77776c; }
.left-col { width: 331px; }
h3 { display: flex; align-items: center; gap: 5px; height: 16px; font: inherit; white-space: nowrap; }
h3::after { content: ""; flex: 1; height: 2px; border-top: 1px solid #aaa; border-bottom: 1px solid #fff; }
.rtl { margin-top: 1px; }
.align-row { display: flex; gap: 25px; padding-left: 15px; }
.fields { width: 167px; padding-top: 2px; }
.fields label { display: block; height: 16px; }
.fields .second { margin-top: 3px; }
.fields.dir { margin-left: 15px; padding-top: 3px; }
.select, .spin { display: flex; height: 20px; padding: 1px; background: #fff; border: 1px solid #333; border-right-color: #f4f4ee; border-bottom-color: #f4f4ee; }
.select { border-right-color: #666; border-bottom-color: #888; }
.select select { flex: 1; appearance: none; padding-left: 2px; }
.select b { width: 15px; display: grid; place-items: center; background: #e5e5d9; border-right: 1px solid #666; border-bottom: 1px solid #666; pointer-events: none; }
.indent-field { padding-top: 25px; }
.indent-field label { display: block; height: 15px; }
.off { color: #aaaa9e; }
.spin { width: 40px; height: 18px; }
.spin input { flex: 1; width: 0; padding-left: 2px; }
.spin b { width: 16px; display: grid; grid-template-rows: 1fr 1fr; background: #e5e5d9; }
.spin i { display: grid; place-items: center; border-right: 1px solid #666; border-bottom: 1px solid #666; }
.su::after { content: ""; border: 3px solid transparent; border-top: 0; border-bottom-color: #000; }
.sd::after { content: ""; border: 3px solid transparent; border-bottom: 0; border-top-color: #000; }
.check { display: flex; align-items: center; gap: 3px; height: 17px; padding-left: 15px; }
.check.off { margin: 6px 0 2px; }
.check input { appearance: none; width: 12px; height: 12px; background: #fff; border: 1px solid #777; border-right-color: #f4f4ee; border-bottom-color: #f4f4ee; }
.check.off input { background: #e5e5d9; }
fieldset { width: 107px; height: 174px; margin: 0; padding: 6px 0 0 8px; border: 1px solid #b4b4a8; }
legend { margin-left: -5px; padding: 0 1px; height: 16px; }
.orient { display: flex; gap: 7px; }
.vertical-text { width: 21px; height: 108px; display: flex; flex-direction: column; justify-content: center; background: #fff; border-left: 1px solid #333; border-top: 1px solid #333; line-height: 12px; }
.vertical-text span { text-align: center; }
.dial { width: 64px; height: 108px; border: 1px solid #333; border-right-color: #fff; border-bottom-color: #fff; }
.dial text { font-size: 10px; }
.degrees { display: flex; gap: 6px; margin-top: 17px; }
.dlg-actions { display: flex; justify-content: flex-end; gap: 7px; margin-top: 15px; }
.dlg-actions button { width: 69px; height: 21px; }
.dlg-actions .ok { border: 1px solid #111; border-right: 2px solid #444; border-bottom: 2px solid #444; }
.cursor { position: absolute; left: 789px; top: 429px; width: 12px; height: 20px; }
</style>
